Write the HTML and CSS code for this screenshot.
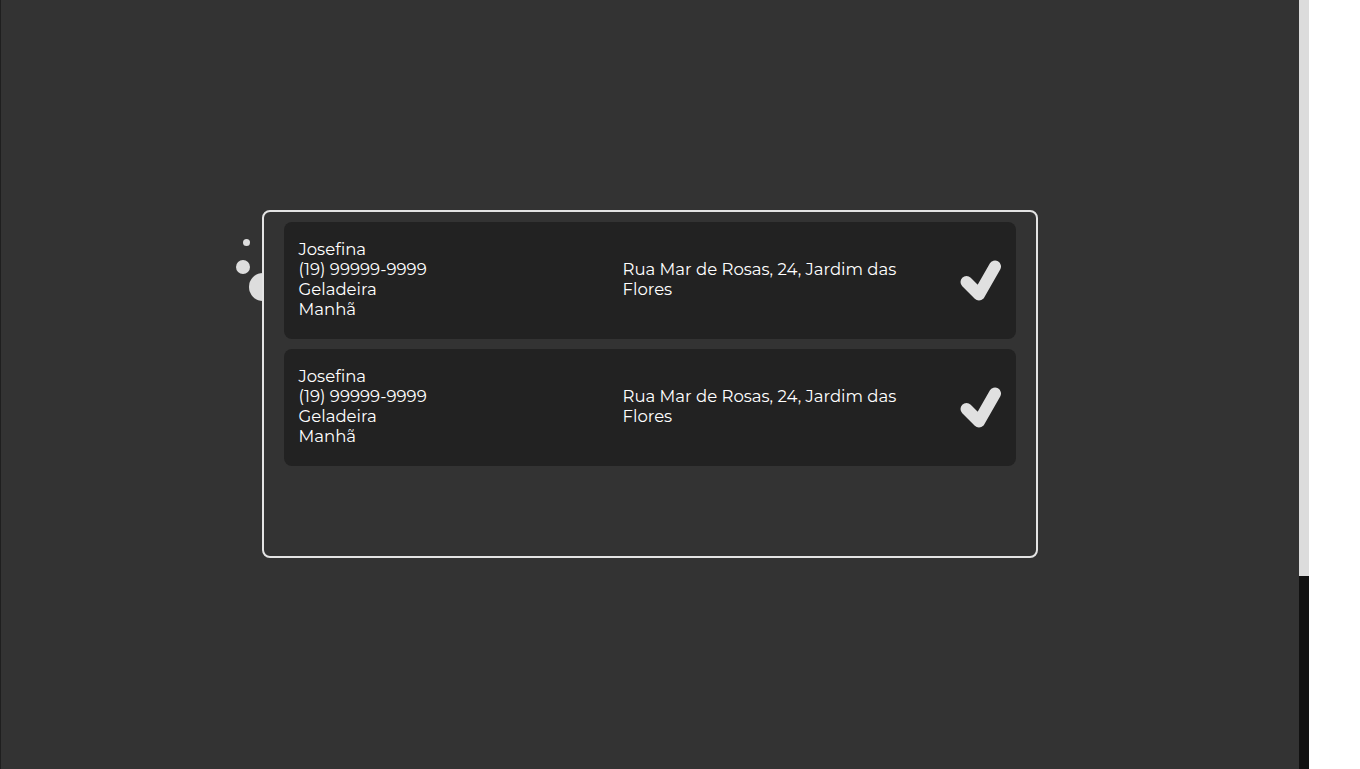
FILE: index.html
```html
<!DOCTYPE html>
<html lang="pt-BR">
<head>
<meta charset="utf-8">
<title>Pedidos</title>
<link rel="stylesheet" href="styles.css">
</head>
<body>
<div class="page">
  <main class="main">
    <div class="panel-wrap">
      <div class="bubbles">
        <span class="bubble b1"></span>
        <span class="bubble b2"></span>
        <span class="bubble b3"></span>
      </div>
      <section class="panel">
        <article class="order">
          <div class="info">
            <div>Josefina</div>
            <div>(19) 99999-9999</div>
            <div>Geladeira</div>
            <div>Manhã</div>
          </div>
          <div class="address">Rua Mar de Rosas, 24, Jardim das Flores</div>
          <svg class="check" viewBox="0 0 42 42" width="42" height="42"><polyline points="6.5,22 19,34.5 35,6.5" fill="none" stroke="#e0e0e0" stroke-width="12" stroke-linecap="round" stroke-linejoin="round"/></svg>
        </article>
        <article class="order">
          <div class="info">
            <div>Josefina</div>
            <div>(19) 99999-9999</div>
            <div>Geladeira</div>
            <div>Manhã</div>
          </div>
          <div class="address">Rua Mar de Rosas, 24, Jardim das Flores</div>
          <svg class="check" viewBox="0 0 42 42" width="42" height="42"><polyline points="6.5,22 19,34.5 35,6.5" fill="none" stroke="#e0e0e0" stroke-width="12" stroke-linecap="round" stroke-linejoin="round"/></svg>
        </article>
      </section>
    </div>
  </main>
  <div class="rail">
    <div class="rail-top"></div>
    <div class="rail-bottom"></div>
  </div>
  <div class="blank"></div>
</div>
</body>
</html>
```

FILE: styles.css
```css
* { box-sizing: border-box; }
html, body { margin: 0; padding: 0; height: 100%; }
body {
  font-family: "Montserrat", "Open Sans", "DejaVu Sans", sans-serif;
  font-size: 16.5px;
  font-weight: 400;
  line-height: 20px;
  color: #ffffff;
  background: #ffffff;
  overflow: hidden;
}
.page {
  display: flex;
  height: 769px;
}
.main {
  width: 1299px;
  flex: none;
  background: #333333;
  border-left: 1px solid #1f1f1f;
  display: flex;
  align-items: flex-start;
  justify-content: center;
  padding-top: 210px;
}
.rail {
  width: 10px;
  flex: none;
  display: flex;
  flex-direction: column;
}
.rail-top { height: 576px; background: #dcdcdc; }
.rail-bottom { flex: 1; background: #111111; }
.blank { flex: 1; background: #fff; }

.panel-wrap {
  position: relative;
  margin-left: -1px;
}
.panel {
  position: relative;
  width: 776px;
  height: 348px;
  border: 2px solid #e4e4e4;
  border-radius: 8px;
  background: #333333;
  padding: 10px 20px;
  display: flex;
  flex-direction: column;
  gap: 10px;
}
.bubbles { position: absolute; left: 0; top: 0; }
.bubble {
  position: absolute;
  border-radius: 50%;
  background: #dddddd;
}
.b1 { width: 7px; height: 7px; left: -19px; top: 29px; }
.b2 { width: 14px; height: 14px; left: -26px; top: 50px; }
.b3 { width: 28px; height: 28px; left: -13px; top: 63px; }

.order {
  height: 117px;
  flex: none;
  background: #222222;
  border-radius: 8px;
  padding: 0 14px 0 15px;
  display: flex;
  align-items: flex-start;
}
.info {
  width: 324px;
  flex: none;
  margin-top: 16.5px;
}
.address {
  width: 300px;
  flex: none;
  margin-top: 36.5px;
}
.check {
  margin-left: auto;
  margin-top: 38px;
  display: block;
}
```
